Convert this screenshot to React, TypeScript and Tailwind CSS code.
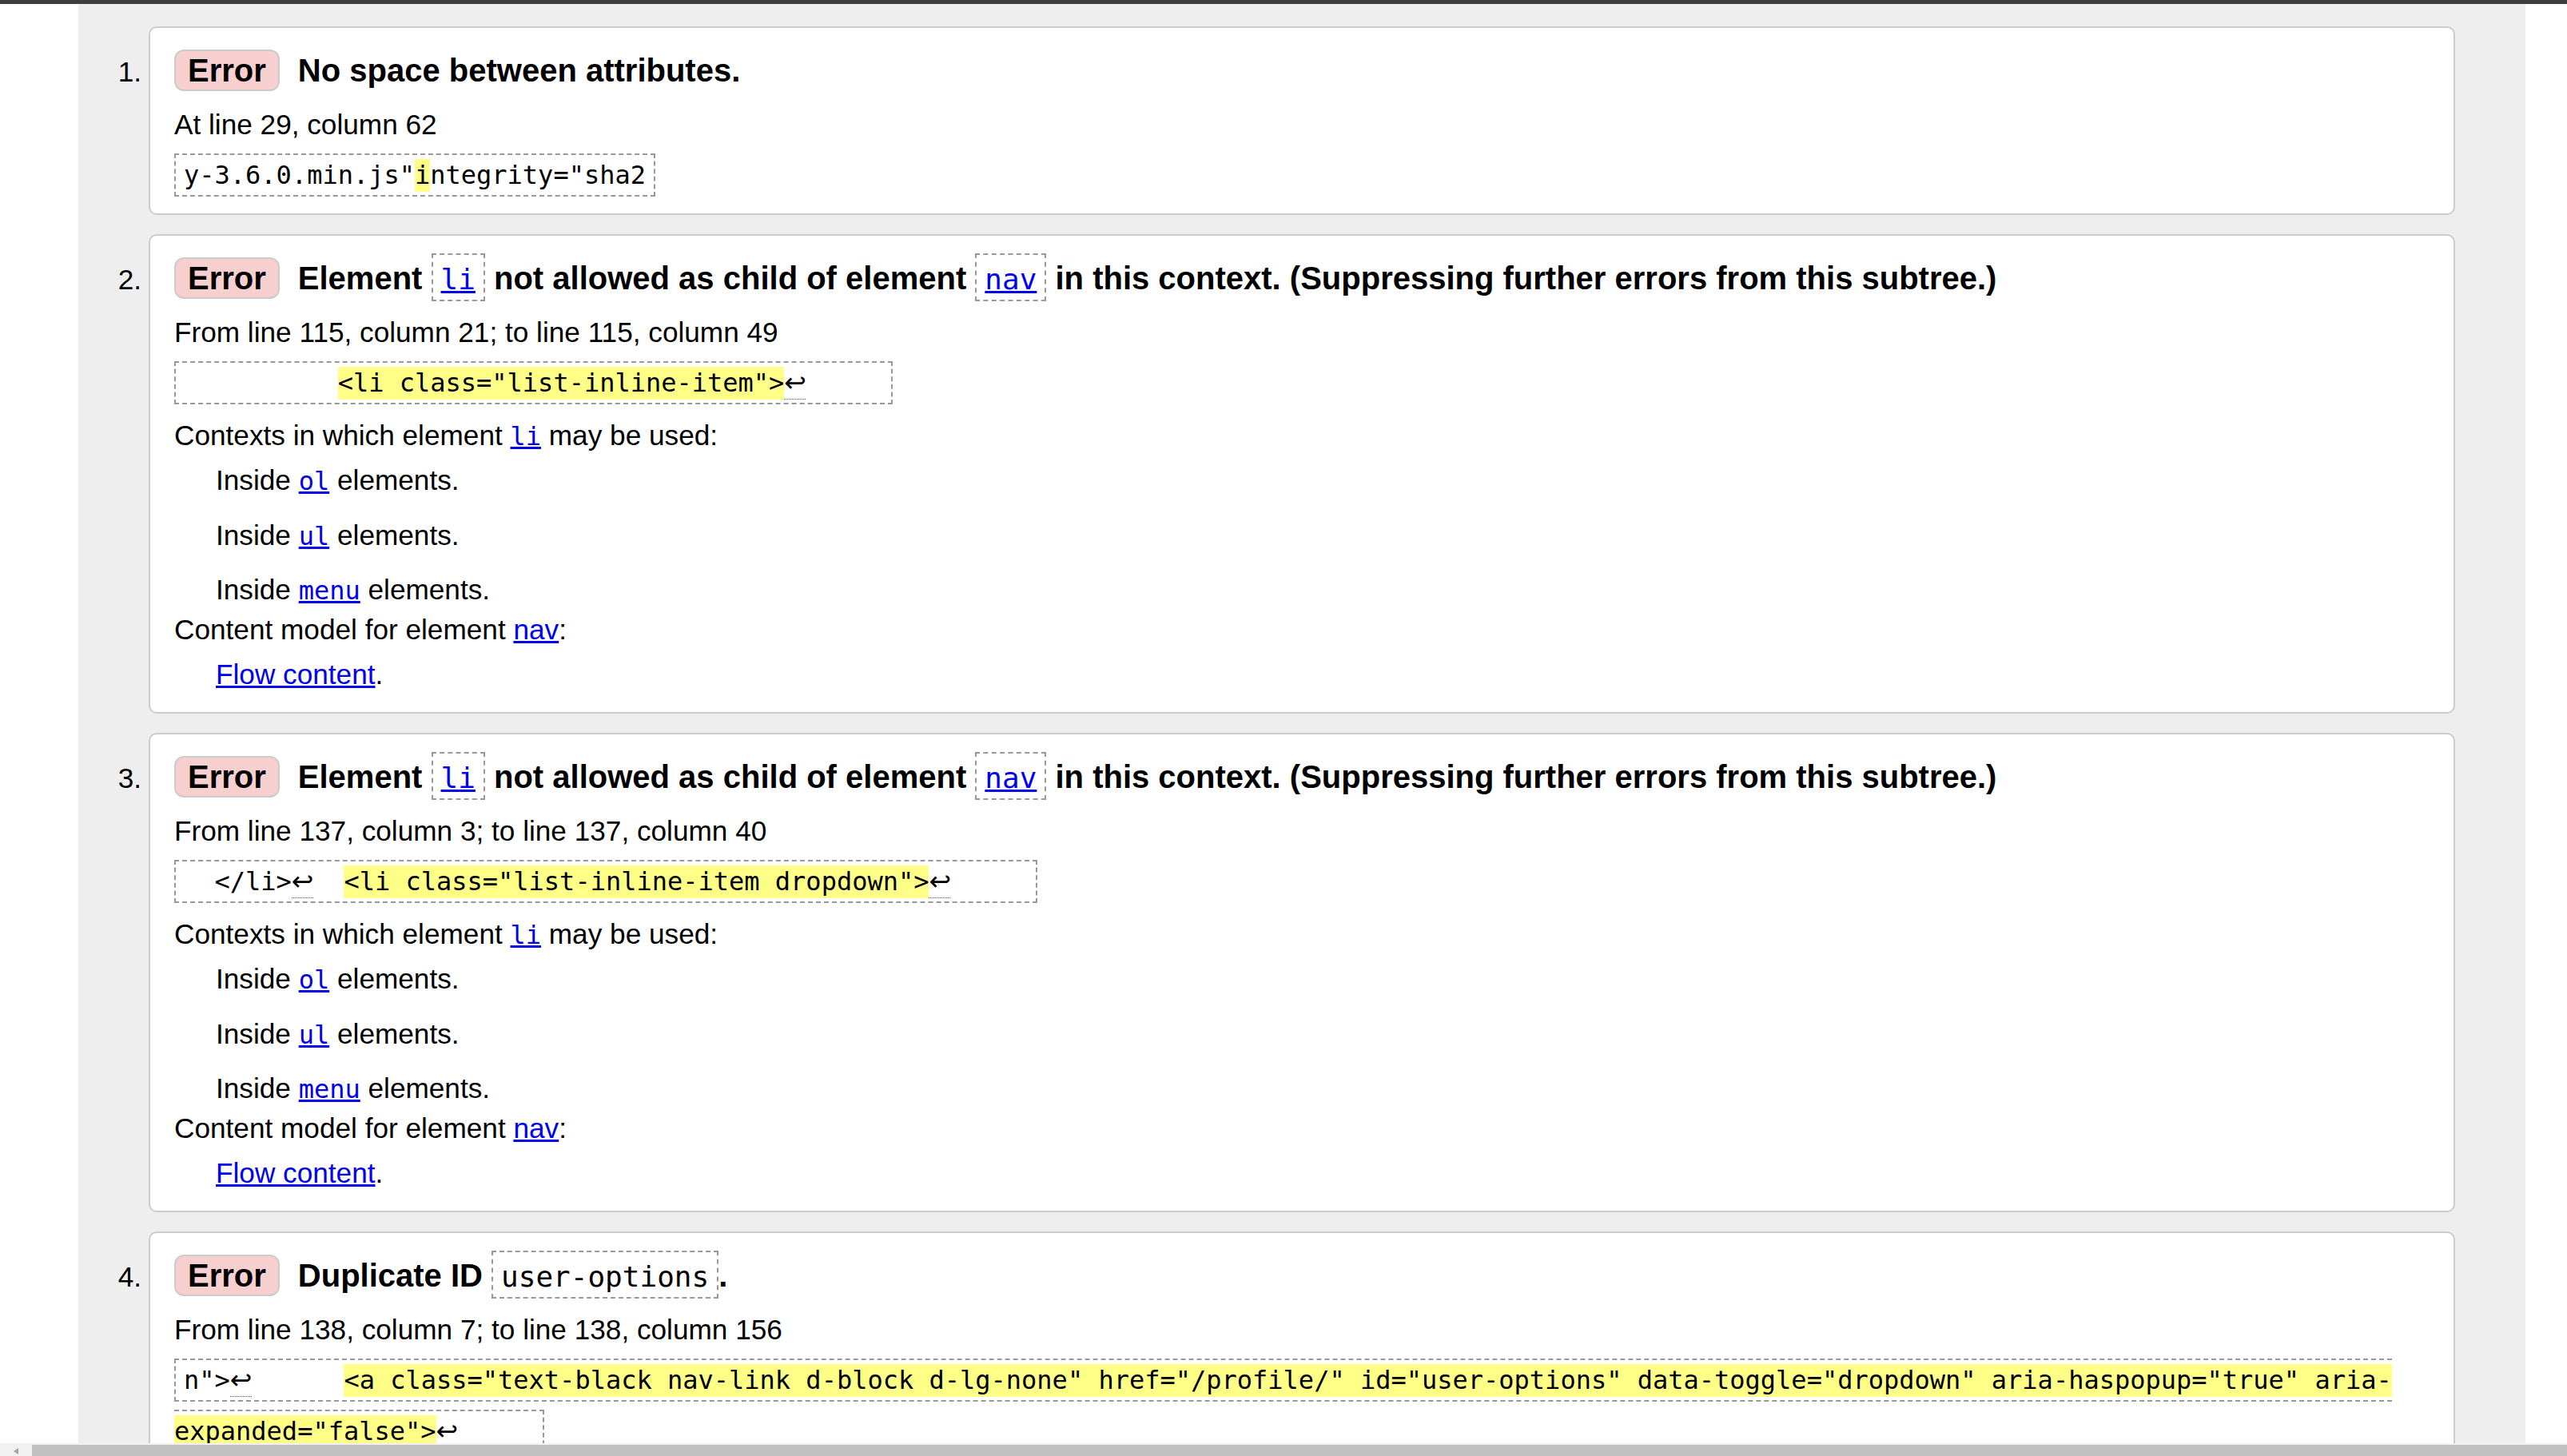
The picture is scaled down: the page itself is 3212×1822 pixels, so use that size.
import React from "react";

function Badge() {
  return (
    <span className="inline-block align-baseline rounded-[12px] border-2 border-[#cccccc] bg-[#f7cfcf] px-[15px] py-[2px] leading-[44px] mr-[23px]">
      Error
    </span>
  );
}

function HBox({ children, link = false }: { children: React.ReactNode; link?: boolean }) {
  return (
    <span className="inline-block align-baseline border-2 border-dashed border-[#999999] px-[10px] pt-[10px] pb-[4px] leading-[42px] font-['DejaVu_Sans_Mono',monospace] text-[36px] font-normal">
      {link ? (
        <a href="#" className="text-[#0000ee] underline">
          {children}
        </a>
      ) : (
        children
      )}
    </span>
  );
}

function Hl({ children }: { children: React.ReactNode }) {
  return <span className="inline-block bg-[#ffff88] leading-[41px]">{children}</span>;
}

function Lf() {
  return (
    <span className="inline-block w-[27px] h-[41px] align-baseline border-b border-dotted border-[#555555] text-center leading-[40px] text-[33px] font-['DejaVu_Sans',sans-serif]">
      ↩
    </span>
  );
}

function CodeBox({ children }: { children: React.ReactNode }) {
  return (
    <div className="w-fit border-2 border-dashed border-[#999999] px-[10px] pt-[5px] pb-[4px] leading-[41px] whitespace-pre font-['DejaVu_Sans_Mono',monospace] text-[32px]">
      {children}
    </div>
  );
}

function MonoLink({ children }: { children: React.ReactNode }) {
  return (
    <a href="#" className="text-[#0000ee] underline">
      <code className="font-['DejaVu_Sans_Mono',monospace] text-[32px] leading-none">{children}</code>
    </a>
  );
}

function Item({ n, children, pb }: { n: number; children: React.ReactNode; pb: string }) {
  return (
    <li className="flex">
      <div className="w-[88px] shrink-0 text-right pr-[9px] pt-[37px] text-[35.2px] leading-[40px]">{n}.</div>
      <div className={"flex-1 min-w-0 rounded-[10px] border-2 border-[#cccccc] bg-white px-[30px] pt-[20px] " + pb}>
        {children}
      </div>
    </li>
  );
}

function Heading({ children }: { children: React.ReactNode }) {
  return (
    <div className="leading-[66px] text-[40px] font-bold whitespace-nowrap">
      <Badge />
      {children}
    </div>
  );
}

function Loc({ children }: { children: React.ReactNode }) {
  return <p className="mt-[15px] text-[35.2px] leading-[40px]">{children}</p>;
}

function Contexts() {
  return (
    <dl className="mt-[19px] text-[35.2px] leading-[40px]">
      <dt>
        Contexts in which element <MonoLink>li</MonoLink> may be used:
      </dt>
      <dd className="mt-[16px] ml-[52px]">
        Inside <MonoLink>ol</MonoLink> elements.
      </dd>
      <dd className="mt-[29px] ml-[52px]">
        Inside <MonoLink>ul</MonoLink> elements.
      </dd>
      <dd className="mt-[28px] ml-[52px]">
        Inside <MonoLink>menu</MonoLink> elements.
      </dd>
      <dt className="mt-[10px]">
        Content model for element{" "}
        <a href="#" className="text-[#0000ee] underline">
          nav
        </a>
        :
      </dt>
      <dd className="mt-[16px] ml-[52px]">
        <a href="#" className="text-[#0000ee] underline">
          Flow content
        </a>
        .
      </dd>
    </dl>
  );
}

export default function App() {
  return (
    <div className="w-[3212px] h-[1822px] overflow-hidden flex flex-col bg-white text-black font-['Liberation_Sans',Arial,sans-serif]">
      <div className="h-[5px] shrink-0 bg-[#3d3e42]" />
      <div className="flex-1 min-h-0 flex overflow-hidden">
        <div className="w-[98px] shrink-0 bg-white" />
        <div className="w-[3062px] shrink-0 bg-[#eeeeee] pt-[28px] pr-[88px]">
          <ol className="flex flex-col gap-[24px]">
            <Item n={1} pb="pb-[21px]">
              <Heading>No space between attributes.</Heading>
              <Loc>At line 29, column 62</Loc>
              <div className="mt-[16px]">
                <CodeBox>
                  {'y-3.6.0.min.js"'}
                  <Hl>i</Hl>
                  {'ntegrity="sha2'}
                </CodeBox>
              </div>
            </Item>
            <Item n={2} pb="pb-[27px]">
              <Heading>
                Element <HBox link>li</HBox> not allowed as child of element <HBox link>nav</HBox> in this context.
                (Suppressing further errors from this subtree.)
              </Heading>
              <Loc>From line 115, column 21; to line 115, column 49</Loc>
              <div className="mt-[16px]">
                <CodeBox>
                  {"          "}
                  <Hl>{'<li class="list-inline-item">'}</Hl>
                  <Lf />
                  {"     "}
                </CodeBox>
              </div>
              <Contexts />
            </Item>
            <Item n={3} pb="pb-[27px]">
              <Heading>
                Element <HBox link>li</HBox> not allowed as child of element <HBox link>nav</HBox> in this context.
                (Suppressing further errors from this subtree.)
              </Heading>
              <Loc>From line 137, column 3; to line 137, column 40</Loc>
              <div className="mt-[16px]">
                <CodeBox>
                  {"  </li>"}
                  <Lf />
                  {"  "}
                  <Hl>{'<li class="list-inline-item dropdown">'}</Hl>
                  <Lf />
                  {"     "}
                </CodeBox>
              </div>
              <Contexts />
            </Item>
            <Item n={4} pb="pb-[27px]">
              <Heading>
                Duplicate ID <HBox>user-options</HBox>.
              </Heading>
              <Loc>From line 138, column 7; to line 138, column 156</Loc>
              <div className="mt-[16px] font-['DejaVu_Sans_Mono',monospace] text-[32px] whitespace-pre">
                <div className="w-fit border-y-2 border-l-2 border-dashed border-[#999999] pl-[10px] pt-[5px] pb-[4px] leading-[41px]">
                  {'n">'}
                  <Lf />
                  {"      "}
                  <Hl>
                    {
                      '<a class="text-black nav-link d-block d-lg-none" href="/profile/" id="user-options" data-toggle="dropdown" aria-haspopup="true" aria-'
                    }
                  </Hl>
                </div>
                <div className="mt-[10px] w-fit border-y-2 border-r-2 border-dashed border-[#999999] pr-[10px] pt-[5px] pb-[4px] leading-[41px]">
                  <Hl>{'expanded="false">'}</Hl>
                  <Lf />
                  {"     "}
                </div>
              </div>
            </Item>
          </ol>
        </div>
        <div className="flex-1 bg-white" />
      </div>
      <div className="h-[16px] shrink-0 flex bg-[#f1f1f1]">
        <div className="w-[40px] flex items-end justify-center pb-[1px]">
          <svg width="10" height="10" viewBox="0 0 10 10">
            <polygon points="2,5 8,1 8,9" fill="#a3a3a3" />
          </svg>
        </div>
        <div className="flex-1 mt-[2px] bg-[#c1c1c1]" />
      </div>
    </div>
  );
}
